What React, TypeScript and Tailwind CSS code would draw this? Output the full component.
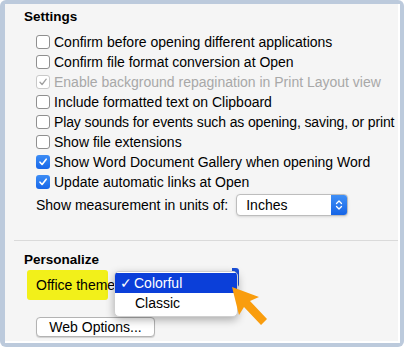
import React from "react";

const rows: { label: string; checked?: boolean; disabled?: boolean; tight?: boolean }[] = [
  { label: "Confirm before opening different applications" },
  { label: "Confirm file format conversion at Open" },
  { label: "Enable background repagination in Print Layout view", checked: true, disabled: true },
  { label: "Include formatted text on Clipboard" },
  { label: "Play sounds for events such as opening, saving, or print", tight: true },
  { label: "Show file extensions" },
  { label: "Show Word Document Gallery when opening Word", checked: true },
  { label: "Update automatic links at Open", checked: true },
];

const Check = ({ checked, disabled }: { checked?: boolean; disabled?: boolean }) => {
  if (checked && !disabled) {
    return (
      <span className="w-[14px] h-[14px] rounded-[3px] bg-gradient-to-b from-[#3d8df5] to-[#1766e8] flex items-center justify-center shrink-0">
        <svg width="10" height="10" viewBox="0 0 10 10">
          <path d="M2 5.2 L4.1 7.5 L8.2 2.2" fill="none" stroke="white" strokeWidth="1.6" strokeLinecap="round" strokeLinejoin="round" />
        </svg>
      </span>
    );
  }
  return (
    <span
      className={`w-[14px] h-[14px] rounded-[3px] border bg-white flex items-center justify-center shrink-0 ${
        disabled ? "border-[#c9c9c9]" : "border-[#8f8f8f]"
      }`}
    >
      {checked && (
        <svg width="10" height="10" viewBox="0 0 10 10">
          <path d="M2 5.2 L4.1 7.5 L8.2 2.2" fill="none" stroke="#a0a0a0" strokeWidth="1.3" strokeLinecap="round" strokeLinejoin="round" />
        </svg>
      )}
    </span>
  );
};

export default function App() {
  return (
    <div className="w-[404px] h-[347px] bg-[#bccadc] pl-[5px] pt-[4px] pr-[4px] pb-[4px] rounded-[6px] overflow-hidden font-['Liberation_Sans',Arial,sans-serif] text-[14px] text-black">
      <div className="relative h-full bg-[#f5f5f5] border-r-2 border-b-2 border-white overflow-hidden">
        <div className="pl-[19px] pt-[5px] font-bold text-[13.5px] leading-[16px]">Settings</div>

        <div className="flex flex-col pl-[31px] pt-[7px]">
          {rows.map((r) => (
            <div key={r.label} className="h-[20px] flex items-center gap-[4px] whitespace-nowrap">
              <Check checked={r.checked} disabled={r.disabled} />
              <span className={`${r.disabled ? "text-[#a8a8a8]" : ""} ${r.tight ? "tracking-[-0.12px]" : ""}`}>
                {r.label}
              </span>
            </div>
          ))}
          <div className="h-[22px] mt-[2px] flex items-center whitespace-nowrap">
            <span>Show measurement in units of:</span>
            <div className="ml-[8px] w-[112px] h-[22px] bg-white border border-[#bdbdbd] rounded-[4px] flex items-center justify-between shadow-sm">
              <span className="pl-[9px]">Inches</span>
              <span className="w-[16px] h-[20px] rounded-r-[3px] bg-gradient-to-b from-[#3f8ff6] to-[#1564e6] flex items-center justify-center">
                <svg width="8" height="12" viewBox="0 0 8 12">
                  <path d="M1.5 4.5 L4 2 L6.5 4.5 M1.5 7.5 L4 10 L6.5 7.5" fill="none" stroke="white" strokeWidth="1.3" strokeLinecap="round" strokeLinejoin="round" />
                </svg>
              </span>
            </div>
          </div>
        </div>

        <div className="ml-[9px] mt-[24px] h-px bg-[#dadada]" />

        <div className="pl-[19px] pt-[11px] font-bold text-[13.5px] leading-[16px]">Personalize</div>

        <div className="pl-[22px] pt-[2px]">
          <div className="w-[81px] h-[30px] bg-[#f2f01a] rounded-[3px] flex items-center pl-[9px] whitespace-nowrap">
            Office theme
          </div>
        </div>

        <div className="pl-[31px] pt-[17px]">
          <div className="w-[119px] h-[20px] bg-white border border-[#b3b3b3] rounded-[4px] flex items-center justify-center shadow-[0_1px_1px_rgba(0,0,0,0.15)]">
            Web Options...
          </div>
        </div>

        {/* open popup menu over the select */}
        <div className="absolute left-[227px] top-[264px] w-[7px] h-[19px] rounded-r-[3px] bg-[#1a4fd8]" />
        <div className="absolute left-[109px] top-[267px] w-[124px] h-[46px] bg-white rounded-[5px] border border-[#cfcfcf] shadow-[0_3px_8px_rgba(0,0,0,0.3)] pt-[1px] overflow-hidden">
          <div className="h-[20px] bg-[#0b3fd9] text-white flex items-center whitespace-nowrap">
            <span className="w-[19px] pl-[5px]">✓</span>
            <span>Colorful</span>
          </div>
          <div className="h-[21px] flex items-center pl-[20px]">Classic</div>
        </div>

        {/* orange arrow */}
        <svg className="absolute left-[215px] top-[275px]" width="50" height="50" viewBox="0 0 50 50">
          <path d="M12 8 L39 18 L30 22 L47 40 L41 46 L24 28 L19 36 Z" fill="#f99d0e" />
        </svg>
      </div>
    </div>
  );
}
